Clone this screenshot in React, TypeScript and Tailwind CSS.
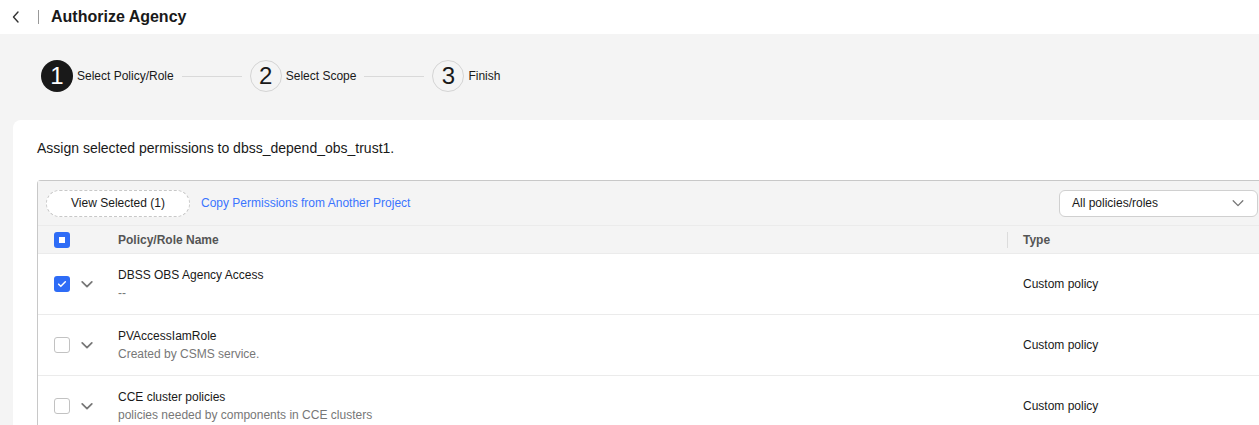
import React from "react";

const steps = [
  { n: 1, label: "Select Policy/Role", active: true },
  { n: 2, label: "Select Scope", active: false },
  { n: 3, label: "Finish", active: false },
];

const rows = [
  { name: "DBSS OBS Agency Access", desc: "--", checked: true },
  { name: "PVAccessIamRole", desc: "Created by CSMS service.", checked: false },
  { name: "CCE cluster policies", desc: "policies needed by components in CCE clusters", checked: false },
];

const Chevron = ({ className = "", w = 1.5 }: { className?: string; w?: number }) => (
  <svg width="14" height="14" viewBox="0 0 16 16" className={className} fill="none">
    <path d="M2.5 5.5L8 11l5.5-5.5" stroke="currentColor" strokeWidth={w} strokeLinecap="round" strokeLinejoin="round" />
  </svg>
);

const Checkbox = ({ checked }: { checked: boolean }) =>
  checked ? (
    <span className="flex h-4 w-4 items-center justify-center rounded-[3px] bg-[#2e6cf6]">
      <svg width="10" height="10" viewBox="0 0 12 12" fill="none">
        <path d="M2 6.2l2.6 2.6L10 3.4" stroke="white" strokeWidth="1.8" strokeLinecap="round" strokeLinejoin="round" />
      </svg>
    </span>
  ) : (
    <span className="block h-4 w-4 rounded-[3px] border border-[#c2c2c2] bg-white" />
  );

export default function App() {
  return (
    <div className="h-[425px] w-[1259px] overflow-hidden bg-[#f4f4f4] font-['Liberation_Sans',Arial,sans-serif] text-[#191919]">
      {/* header */}
      <div className="flex h-[34px] items-center bg-white">
        <svg width="10" height="14" viewBox="0 0 10 14" className="ml-[11px] text-[#333]" fill="none">
          <path d="M7 2L2.5 7 7 12" stroke="currentColor" strokeWidth="1.4" strokeLinecap="round" strokeLinejoin="round" />
        </svg>
        <span className="ml-[17px] h-[14px] w-px bg-[#999]" />
        <h1 className="ml-3 text-[16px] font-bold">Authorize Agency</h1>
      </div>

      {/* steps */}
      <div className="flex h-[84px] items-center pl-[41px]">
        {steps.map((s, i) => (
          <div key={s.n} className="flex items-center">
            <span
              className={`flex h-8 w-8 items-center justify-center rounded-full text-[24px] ${
                s.active ? "bg-[#191919] text-white" : "border border-[#d4d4d4] bg-[#f4f4f4] text-[#191919]"
              }`}
            >
              {s.n}
            </span>
            <span className="ml-1 text-[12px]">{s.label}</span>
            {i < steps.length - 1 && <span className="mx-[8px] h-px w-[60px] bg-[#d9d9d9]" />}
          </div>
        ))}
      </div>

      {/* card */}
      <div className="ml-[13px] mt-[2px] rounded-tl-[8px] bg-white pl-6 pt-[19px]">
        <p className="text-[14px] leading-[18px]">Assign selected permissions to dbss_depend_obs_trust1.</p>

        <div className="mt-[23px] rounded-tl-[4px] border-l border-t border-[#c8c8c8]">
          <div className="flex h-[44px] items-center bg-[#f4f4f4] pl-2 pr-[1px]">
            <button className="h-[27px] w-[144px] rounded-full border border-dashed border-[#c8c8c8] bg-white text-[12px]">
              View Selected (1)
            </button>
            <a className="ml-[11px] text-[12px] text-[#3a74ff]">Copy Permissions from Another Project</a>
            <div className="ml-auto flex h-[27px] w-[199px] items-center justify-between rounded-[6px] border border-[#d0d0d0] bg-white pl-3 pr-3 text-[12px]">
              <span>All policies/roles</span>
              <Chevron className="text-[#777]" />
            </div>
          </div>

          <div className="flex h-[29px] items-center border-b border-t border-[#ebebeb] bg-[#f4f4f4] text-[12px] font-bold text-[#555]">
            <span className="ml-4 flex h-4 w-4 items-center justify-center rounded-[3px] bg-[#2e6cf6]">
              <span className="h-[6px] w-[6px] bg-white" />
            </span>
            <span className="ml-[48px] w-[889px]">Policy/Role Name</span>
            <span className="h-[16px] w-px bg-[#dcdcdc]" />
            <span className="ml-[15px]">Type</span>
          </div>

          {rows.map((r) => (
            <div key={r.name} className="flex h-[61px] items-center border-b border-[#ebebeb] text-[12px]">
              <span className="ml-4">
                <Checkbox checked={r.checked} />
              </span>
              <Chevron className="ml-[10px] text-[#777]" w={2} />
              <div className="ml-[24px] w-[905px]">
                <div className="leading-[16px]">{r.name}</div>
                <div className="mt-[2px] leading-[16px] text-[#777]">{r.desc}</div>
              </div>
              <span>Custom policy</span>
            </div>
          ))}
        </div>
      </div>
    </div>
  );
}
